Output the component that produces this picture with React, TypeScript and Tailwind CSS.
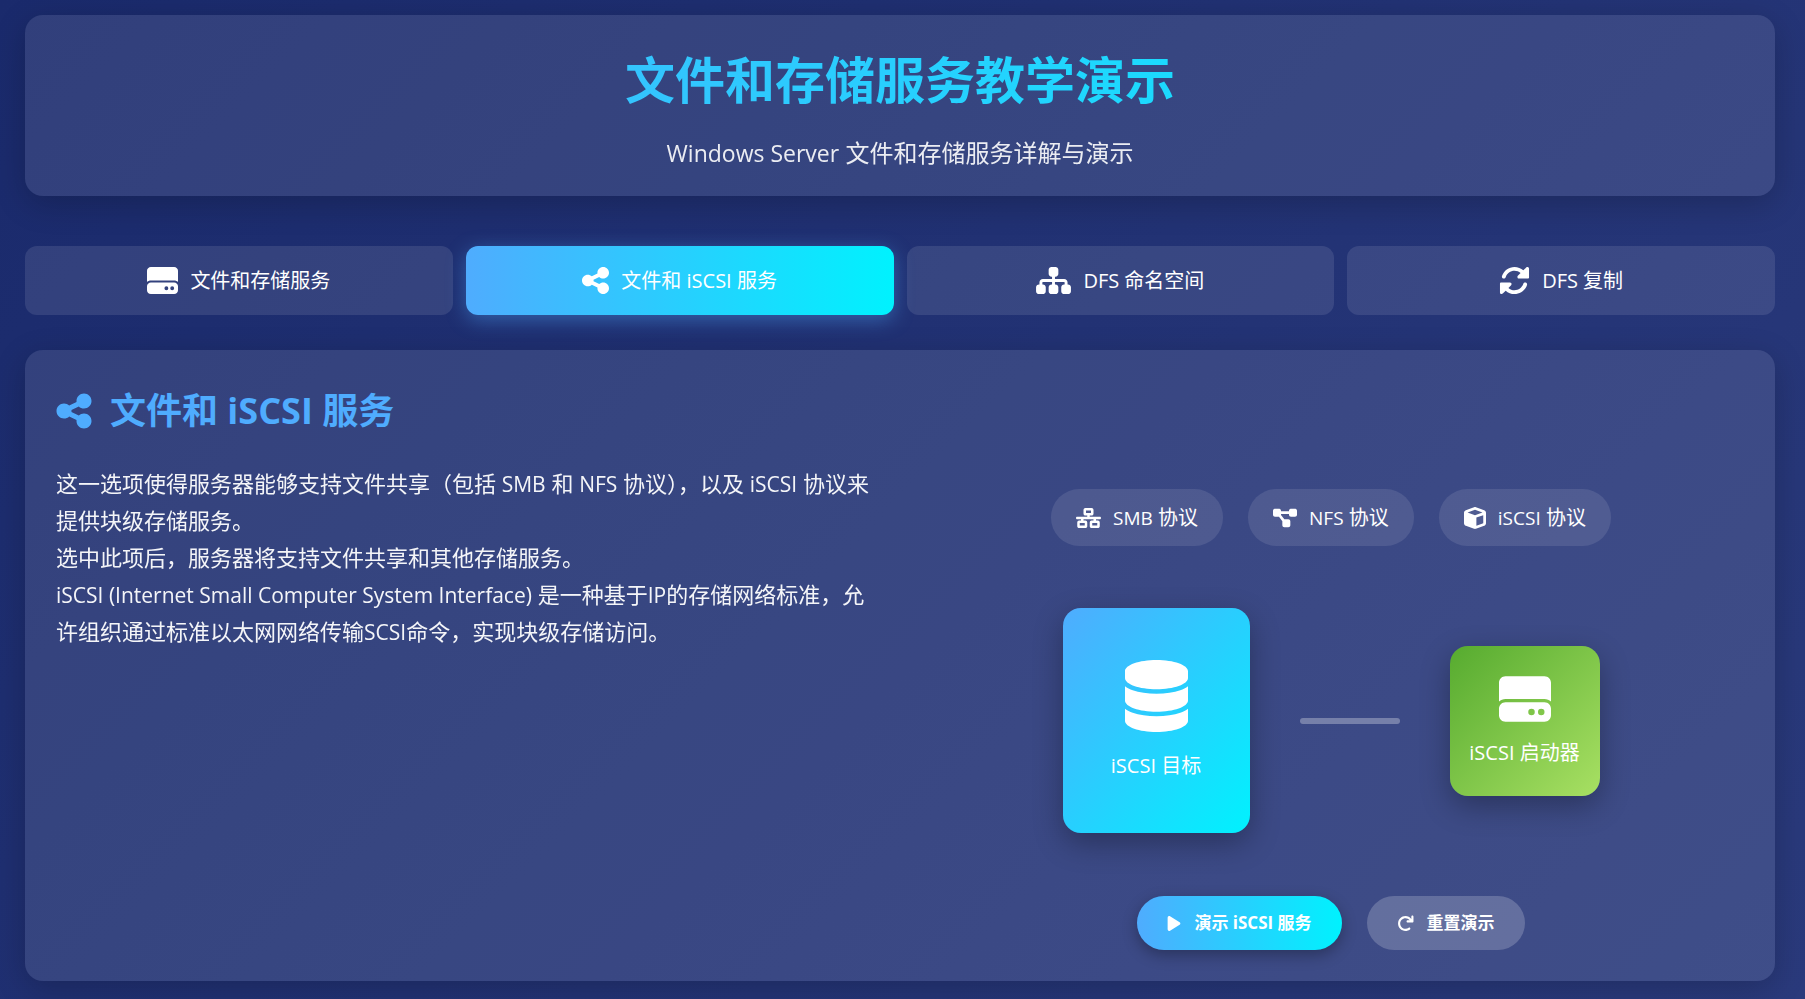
import type { ReactNode } from 'react'
import {
	FaCube,
	FaDatabase,
	FaDiagramProject,
	FaHardDrive,
	FaNetworkWired,
	FaPlay,
	FaShareNodes,
	FaSitemap,
} from 'react-icons/fa6'

function SyncIcon({ className }: { className: string }) {
	return (
		<svg viewBox="0 0 512 512" fill="currentColor" className={className} aria-hidden="true">
			<path d="M449.9 39.96l-48.5 48.53C362.5 53.19 311.4 32 256 32C161.5 32 78.59 92.34 49.58 182.2c-5.438 16.81 3.797 34.88 20.61 40.28c16.97 5.5 34.86-3.812 40.3-20.59C130.9 138.5 189.4 96 256 96c37.96 0 73 14.18 100.2 37.8L311.1 178C295.1 194.8 306.8 223.4 330.4 224h146.9C487.7 223.7 496 215.3 496 204.9V59.04C496 34.99 466.9 22.95 449.9 39.96zM441.8 289.6c-16.94-5.438-34.88 3.812-40.3 20.59C381.1 373.5 322.6 416 256 416c-37.96 0-73-14.18-100.2-37.8L200 334C216.9 317.2 205.2 288.6 181.6 288H34.66C24.32 288.3 16 296.7 16 307.1v145.9c0 24.04 29.07 36.08 46.07 19.07l48.5-48.53C149.5 458.8 200.6 480 255.1 480c95.45 0 178.4-60.34 207.4-150.2C467.9 313 458.6 294.1 441.8 289.6z" />
		</svg>
	)
}

function ResetIcon({ className }: { className: string }) {
	return (
		<svg viewBox="0 0 512 512" fill="currentColor" className={className} aria-hidden="true">
			<path d="M496 48V192c0 17.69-14.31 32-32 32H320c-17.69 0-32-14.31-32-32s14.31-32 32-32h63.39c-29.97-39.7-77.25-63.78-127.6-63.78C167.7 96.22 96 167.9 96 256s71.69 159.8 159.8 159.8c34.88 0 68.03-11.03 95.88-31.94c14.22-10.53 34.22-7.75 44.81 6.375c10.59 14.16 7.75 34.22-6.375 44.81c-39.03 29.28-85.36 44.86-134.2 44.86C132.5 479.9 32 379.4 32 256s100.5-223.9 223.9-223.9c69.15 0 134 32.47 176.1 86.12V48c0-17.69 14.31-32 32-32S496 30.31 496 48z" />
		</svg>
	)
}

const tabs = [
	{ label: '文件和存储服务', icon: <FaHardDrive className="h-[31px] w-[31px]" />, active: false },
	{ label: '文件和 iSCSI 服务', icon: <FaShareNodes className="h-[31px] w-[27px]" />, active: true },
	{ label: 'DFS 命名空间', icon: <FaSitemap className="h-[31px] w-[35px]" />, active: false },
	{ label: 'DFS 复制', icon: <SyncIcon className="h-[31px] w-[31px]" />, active: false },
]

const protocols = [
	{ name: 'SMB', icon: <FaNetworkWired className="h-5 w-[25px]" /> },
	{ name: 'NFS', icon: <FaDiagramProject className="h-[22px] w-6" /> },
	{ name: 'iSCSI', icon: <FaCube className="h-[22px] w-[22px]" /> },
]

function Panel({ className, children }: { className: string; children: ReactNode }) {
	return (
		<div className={`rounded-[18px] bg-white/10 shadow-[0_8px_32px_rgba(0,0,0,0.2)] ${className}`}>{children}</div>
	)
}

// Latin runs inside the description sit a step below the Chinese text
function Latin({ children }: { children: ReactNode }) {
	return <span className="text-[21px] leading-none">{children}</span>
}

function Tabs() {
	return (
		<nav className="mt-[50px] grid grid-cols-4 gap-[13px]">
			{tabs.map((tab) => (
				<button
					key={tab.label}
					type="button"
					aria-pressed={tab.active}
					className={`flex h-[69px] items-center justify-center gap-3 rounded-xl text-xl ${
						tab.active
							? 'bg-linear-to-r/srgb from-[#4facfe] to-[#00f2fe] shadow-[0_5px_20px_rgba(79,172,254,0.4)]'
							: 'bg-white/10'
					}`}
				>
					{tab.icon}
					<span>{tab.label}</span>
				</button>
			))}
		</nav>
	)
}

function Diagram() {
	return (
		<div className="mt-[62px] flex items-center justify-center gap-[50px]">
			<div className="flex h-[225px] w-[187px] flex-col items-center justify-center gap-[18px] rounded-[18px] bg-linear-to-br/srgb from-[#4facfe] to-[#00f2fe] shadow-[0_10px_30px_rgba(0,0,0,0.3)]">
				<FaDatabase className="h-[72px] w-[63px]" />
				<span className="text-xl leading-8">iSCSI 目标</span>
			</div>
			<div className="h-[6px] w-[100px] rounded-[3px] bg-white/30" />
			<div className="flex h-[150px] w-[150px] flex-col items-center justify-center gap-3 rounded-[18px] bg-linear-to-br/srgb from-[#56ab2f] to-[#a8e063] shadow-[0_10px_30px_rgba(0,0,0,0.3)]">
				<FaHardDrive className="h-[52px] w-[52px]" />
				<span className="text-xl leading-8">iSCSI 启动器</span>
			</div>
		</div>
	)
}

export default function App() {
	return (
		<div className="min-h-screen bg-linear-135/srgb from-[#1a2a6c] to-[#2a3a7c] py-[15px] pr-[30px] pl-[25px] font-['Open_Sans','Noto_Sans_CJK_SC',sans-serif] text-white">
			<Panel className="flex flex-col items-center pt-[30px] pb-[23px] text-center">
				<h1 className="w-full bg-linear-to-r/srgb from-[#4facfe] to-[#00f2fe] bg-clip-text text-[50px] leading-[70px] font-bold text-transparent">
					文件和存储服务教学演示
				</h1>
				<p className="mt-[18px] text-2xl leading-10 opacity-90">
					<span className="text-[23px]">Windows Server</span> 文件和存储服务详解与演示
				</p>
			</Panel>

			<Tabs />

			<Panel className="mt-[35px] grid min-h-[631px] grid-cols-2 gap-[36px] p-[31px]">
				<section>
					<h2 className="flex items-center gap-[18px] text-4xl leading-[60px] font-bold text-[#4facfe]">
						<FaShareNodes className="h-10 w-9" />
						文件和 iSCSI 服务
					</h2>
					<p className="mt-6 text-[22px] leading-[37px] opacity-95">
						这一选项使得服务器能够支持文件共享（包括 <Latin>SMB</Latin> 和 <Latin>NFS</Latin> 协议），以及{' '}
						<Latin>iSCSI</Latin> 协议来
						<br />
						提供块级存储服务。
						<br />
						选中此项后，服务器将支持文件共享和其他存储服务。
						<br />
						<Latin>iSCSI (Internet Small Computer System Interface)</Latin> 是一种基于<Latin>IP</Latin>
						的存储网络标准，允
						<br />
						许组织通过标准以太网网络传输<Latin>SCSI</Latin>命令，实现块级存储访问。
					</p>
				</section>

				<section className="flex flex-col justify-end">
					<div className="flex justify-center gap-[25px]">
						{protocols.map((protocol) => (
							<div
								key={protocol.name}
								className="flex h-[57px] items-center gap-3 rounded-full bg-white/10 px-[25px] text-xl"
							>
								{protocol.icon}
								<span>
									<span className="text-[19px]">{protocol.name}</span> 协议
								</span>
							</div>
						))}
					</div>

					<Diagram />

					<div className="mt-[63px] flex justify-center gap-[25px] text-[17px] font-bold">
						<button
							type="button"
							className="flex h-[54px] items-center gap-[13px] rounded-full bg-linear-to-r/srgb from-[#4facfe] to-[#00f2fe] px-[30px] shadow-[0_5px_15px_rgba(0,0,0,0.3)]"
						>
							<FaPlay className="h-[17px] w-[14px]" />
							演示 iSCSI 服务
						</button>
						<button
							type="button"
							className="flex h-[54px] items-center gap-[13px] rounded-full bg-white/20 px-[30px]"
						>
							<ResetIcon className="h-[17px] w-[17px]" />
							重置演示
						</button>
					</div>
				</section>
			</Panel>
		</div>
	)
}
